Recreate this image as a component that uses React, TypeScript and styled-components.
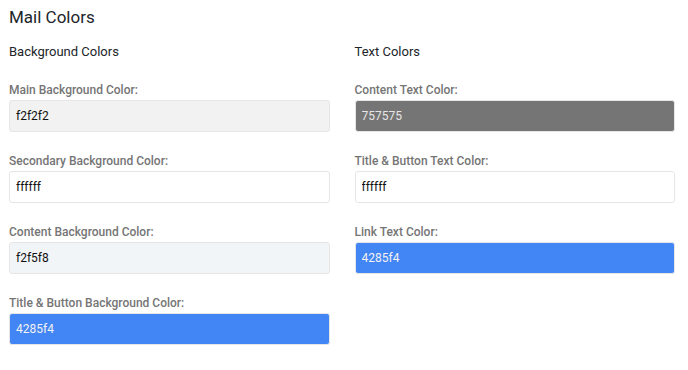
import React from "react";
import styled, { createGlobalStyle } from "styled-components";

const Global = createGlobalStyle`
  html, body { margin: 0; padding: 0; background: #ffffff; }
  body { font-family: Roboto, "Liberation Sans", Arial, sans-serif; }
`;

const Page = styled.div`
  padding: 5px 13px 0 9px;
`;

const Title = styled.h2`
  margin: 0;
  font-size: 17px;
  font-weight: 400;
  color: #212529;
  line-height: 24px;
`;

const Columns = styled.div`
  display: grid;
  grid-template-columns: 1fr 1fr;
  column-gap: 25px;
  margin-top: 13px;
`;

const Column = styled.div`
  display: flex;
  flex-direction: column;
`;

const SectionTitle = styled.h3`
  margin: 0 0 20px;
  font-size: 13px;
  font-weight: 400;
  color: #212529;
  line-height: 20px;
`;

const Field = styled.div`
  display: flex;
  flex-direction: column;
  margin-bottom: 21px;
`;

const Label = styled.label`
  font-size: 12px;
  font-weight: 500;
  color: #757575;
  line-height: 16px;
  margin-bottom: 2px;
`;

const ColorInput = styled.input<{ $bg: string; $fg: string }>`
  box-sizing: border-box;
  height: 32px;
  width: 100%;
  padding: 0 6px;
  border: 1px solid #e6e6e6;
  border-radius: 3px;
  background: ${(p) => p.$bg};
  color: ${(p) => p.$fg};
  font-family: Roboto, "Liberation Sans", Arial, sans-serif;
  font-size: 12px;
  outline: none;
`;

type F = { label: string; value: string; bg: string; fg: string };

const left: F[] = [
  { label: "Main Background Color:", value: "f2f2f2", bg: "#f2f2f2", fg: "#111" },
  { label: "Secondary Background Color:", value: "ffffff", bg: "#ffffff", fg: "#111" },
  { label: "Content Background Color:", value: "f2f5f8", bg: "#f2f5f8", fg: "#111" },
  { label: "Title & Button Background Color:", value: "4285f4", bg: "#4285f4", fg: "#f2f2f2" },
];

const right: F[] = [
  { label: "Content Text Color:", value: "757575", bg: "#757575", fg: "#e6e6e6" },
  { label: "Title & Button Text Color:", value: "ffffff", bg: "#ffffff", fg: "#111" },
  { label: "Link Text Color:", value: "4285f4", bg: "#4285f4", fg: "#f2f2f2" },
];

const FieldList = ({ items }: { items: F[] }) => (
  <>
    {items.map((f) => (
      <Field key={f.label}>
        <Label>{f.label}</Label>
        <ColorInput $bg={f.bg} $fg={f.fg} defaultValue={f.value} readOnly />
      </Field>
    ))}
  </>
);

export default function App() {
  return (
    <>
      <Global />
      <Page>
        <Title>Mail Colors</Title>
        <Columns>
          <Column>
            <SectionTitle>Background Colors</SectionTitle>
            <FieldList items={left} />
          </Column>
          <Column>
            <SectionTitle>Text Colors</SectionTitle>
            <FieldList items={right} />
          </Column>
        </Columns>
      </Page>
    </>
  );
}
